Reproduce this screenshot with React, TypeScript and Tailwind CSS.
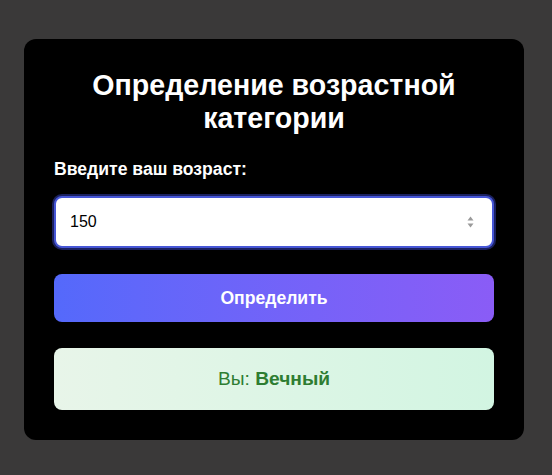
export default function App() {
  return (
    <div className="min-h-[475px] w-full bg-[#3a3939] pt-[39px] pl-[24px] font-[Liberation_Sans,Arial,sans-serif]">
      <div className="w-[500px] bg-black rounded-[12px] p-[30px]">
        <h1 className="text-white text-[28.6px] leading-[33px] font-bold text-center mb-[24px]">
          Определение возрастной категории
        </h1>
        <label className="block text-white text-[17.6px] leading-[20px] font-bold mb-[17px]">Введите ваш возраст:</label>
        <div className="relative">
          <input
            type="number"
            defaultValue="150"
            autoFocus
            className="w-full h-[52px] rounded-[8px] bg-white border-2 border-[#4656d6] shadow-[0_0_0_2px_#1b2160] pl-[14px] pr-[30px] text-[16px] text-black outline-none caret-black [appearance:textfield] [&::-webkit-inner-spin-button]:appearance-none [&::-webkit-outer-spin-button]:appearance-none"
          />
          <svg
            className="absolute right-[20px] top-1/2 -translate-y-1/2 pointer-events-none"
            width="7"
            height="13"
            viewBox="0 0 7 13"
          >
            <path d="M3.5 1 L6.5 5 L0.5 5 Z" fill="#9a9a9a" />
            <path d="M3.5 12 L6.5 8 L0.5 8 Z" fill="#9a9a9a" />
          </svg>
        </div>
        <button className="mt-[26px] w-full h-[48px] rounded-[8px] bg-gradient-to-r from-[#5469fb] to-[#8a5cf6] text-white text-[17.6px] font-bold">
          Определить
        </button>
        <div className="mt-[26px] h-[62px] rounded-[8px] bg-gradient-to-r from-[#e8f5e9] to-[#d2f5e2] flex items-center justify-center text-[19.2px] text-[#2e7d32]">
          <span>
            Вы: <b className="font-bold">Вечный</b>
          </span>
        </div>
      </div>
    </div>
  );
}
